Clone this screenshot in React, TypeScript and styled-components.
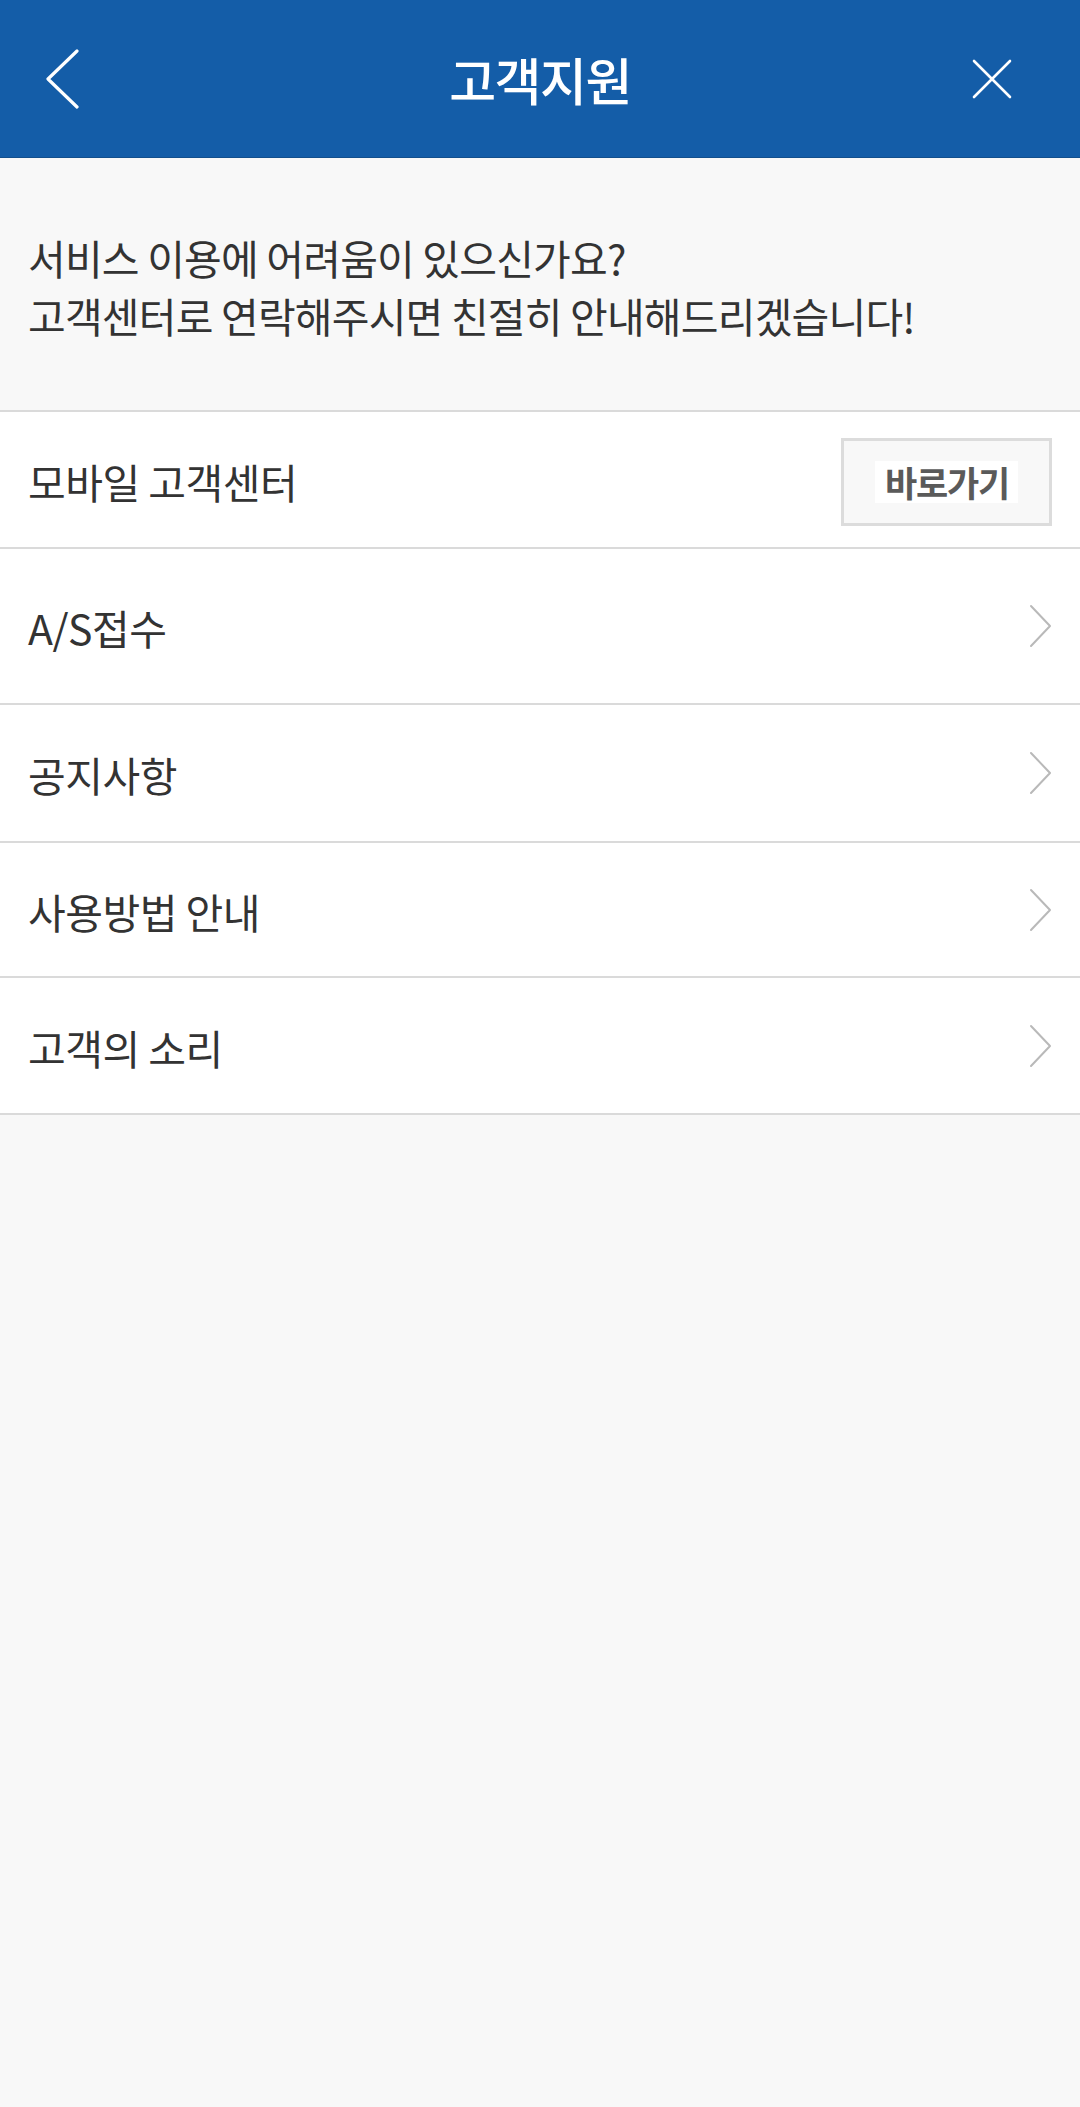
import React from "react";
import styled, { createGlobalStyle } from "styled-components";

const GlobalStyle = createGlobalStyle`
  html, body {
    margin: 0;
    padding: 0;
    background: #f8f8f8;
  }
  body {
    font-family: "Noto Sans CJK KR", "Noto Sans", sans-serif;
    -webkit-font-smoothing: antialiased;
  }
  * { box-sizing: border-box; }
`;

const Page = styled.div`
  width: 1080px;
  min-height: 2107px;
  background: #f8f8f8;
  display: flex;
  flex-direction: column;
`;

const Header = styled.header`
  height: 158px;
  background: #145da8;
  border-bottom: 1px solid #134f8c;
  display: grid;
  grid-template-columns: 140px 1fr 140px;
  align-items: center;
`;

const IconButton = styled.button<{ $align: "start" | "end" }>`
  background: none;
  border: none;
  padding: 0;
  margin: 0;
  height: 100%;
  display: flex;
  align-items: center;
  justify-content: ${(p) => (p.$align === "start" ? "flex-start" : "flex-end")};
  padding-left: ${(p) => (p.$align === "start" ? "44px" : "0")};
  padding-right: ${(p) => (p.$align === "end" ? "68px" : "0")};
  cursor: pointer;
`;

const Title = styled.h1`
  margin: 0;
  text-align: center;
  color: #ffffff;
  font-size: 51px;
  font-weight: 500;
  letter-spacing: -1.5px;
  line-height: 1;
  padding-top: 2px;
`;

const Intro = styled.section`
  height: 254px;
  display: flex;
  flex-direction: column;
  justify-content: center;
  padding: 4px 28px 0;
  border-bottom: 2px solid #dadada;
`;

const IntroLine = styled.p`
  margin: 0;
  color: #333333;
  font-size: 41px;
  line-height: 58px;
  letter-spacing: -0.8px;
  white-space: nowrap;
`;

const List = styled.ul`
  list-style: none;
  margin: 0;
  padding: 0;
  background: #ffffff;
`;

const Row = styled.li<{ $height: number }>`
  height: ${(p) => p.$height}px;
  display: flex;
  align-items: center;
  justify-content: space-between;
  padding: 0 28px 0 28px;
  border-bottom: 2px solid #dadada;
  background: #ffffff;
`;

const Label = styled.span`
  color: #333333;
  font-size: 41px;
  letter-spacing: -0.5px;
  line-height: 1;
  padding-top: 3px;
`;

const ShortcutButton = styled.button`
  width: 211px;
  height: 88px;
  background: #f8f8f8;
  border: 3px solid #dcdcdc;
  display: flex;
  align-items: center;
  justify-content: center;
  padding: 0;
  margin-top: 4px;
  cursor: pointer;
`;

const ShortcutText = styled.span`
  background: #ffffff;
  color: #5a5a5a;
  font-family: "Noto Sans CJK KR", "Noto Sans", sans-serif;
  font-size: 35px;
  font-weight: 700;
  letter-spacing: -1.2px;
  line-height: 42px;
  padding: 0 9px 0 10px;
`;

const Chevron = styled.svg`
  width: 23px;
  height: 44px;
  flex: none;
`;

const BackIcon = () => (
  <svg width="36" height="60" viewBox="0 0 36 60">
    <polyline
      points="33,2 4,30 33,58"
      fill="none"
      stroke="#ffffff"
      strokeWidth="3.2"
      strokeLinecap="round"
      strokeLinejoin="round"
    />
  </svg>
);

const CloseIcon = () => (
  <svg width="40" height="40" viewBox="0 0 40 40">
    <path
      d="M2 2 L38 38 M38 2 L2 38"
      fill="none"
      stroke="#ffffff"
      strokeWidth="2.6"
      strokeLinecap="round"
    />
  </svg>
);

const RowArrow = () => (
  <Chevron viewBox="0 0 23 44">
    <polyline
      points="2,2 21,22 2,42"
      fill="none"
      stroke="#b9b9b9"
      strokeWidth="2"
      strokeLinecap="round"
      strokeLinejoin="round"
    />
  </Chevron>
);

const items: { label: string; height: number }[] = [
  { label: "A/S접수", height: 156 },
  { label: "공지사항", height: 138 },
  { label: "사용방법 안내", height: 135 },
  { label: "고객의 소리", height: 137 },
];

export default function App() {
  return (
    <>
      <GlobalStyle />
      <Page>
        <Header>
          <IconButton $align="start" aria-label="뒤로">
            <BackIcon />
          </IconButton>
          <Title>고객지원</Title>
          <IconButton $align="end" aria-label="닫기">
            <CloseIcon />
          </IconButton>
        </Header>
        <Intro>
          <IntroLine>서비스 이용에 어려움이 있으신가요?</IntroLine>
          <IntroLine>고객센터로 연락해주시면 친절히 안내해드리겠습니다!</IntroLine>
        </Intro>
        <List>
          <Row $height={137}>
            <Label>모바일 고객센터</Label>
            <ShortcutButton>
              <ShortcutText>바로가기</ShortcutText>
            </ShortcutButton>
          </Row>
          {items.map((it) => (
            <Row key={it.label} $height={it.height}>
              <Label>{it.label}</Label>
              <RowArrow />
            </Row>
          ))}
        </List>
      </Page>
    </>
  );
}
